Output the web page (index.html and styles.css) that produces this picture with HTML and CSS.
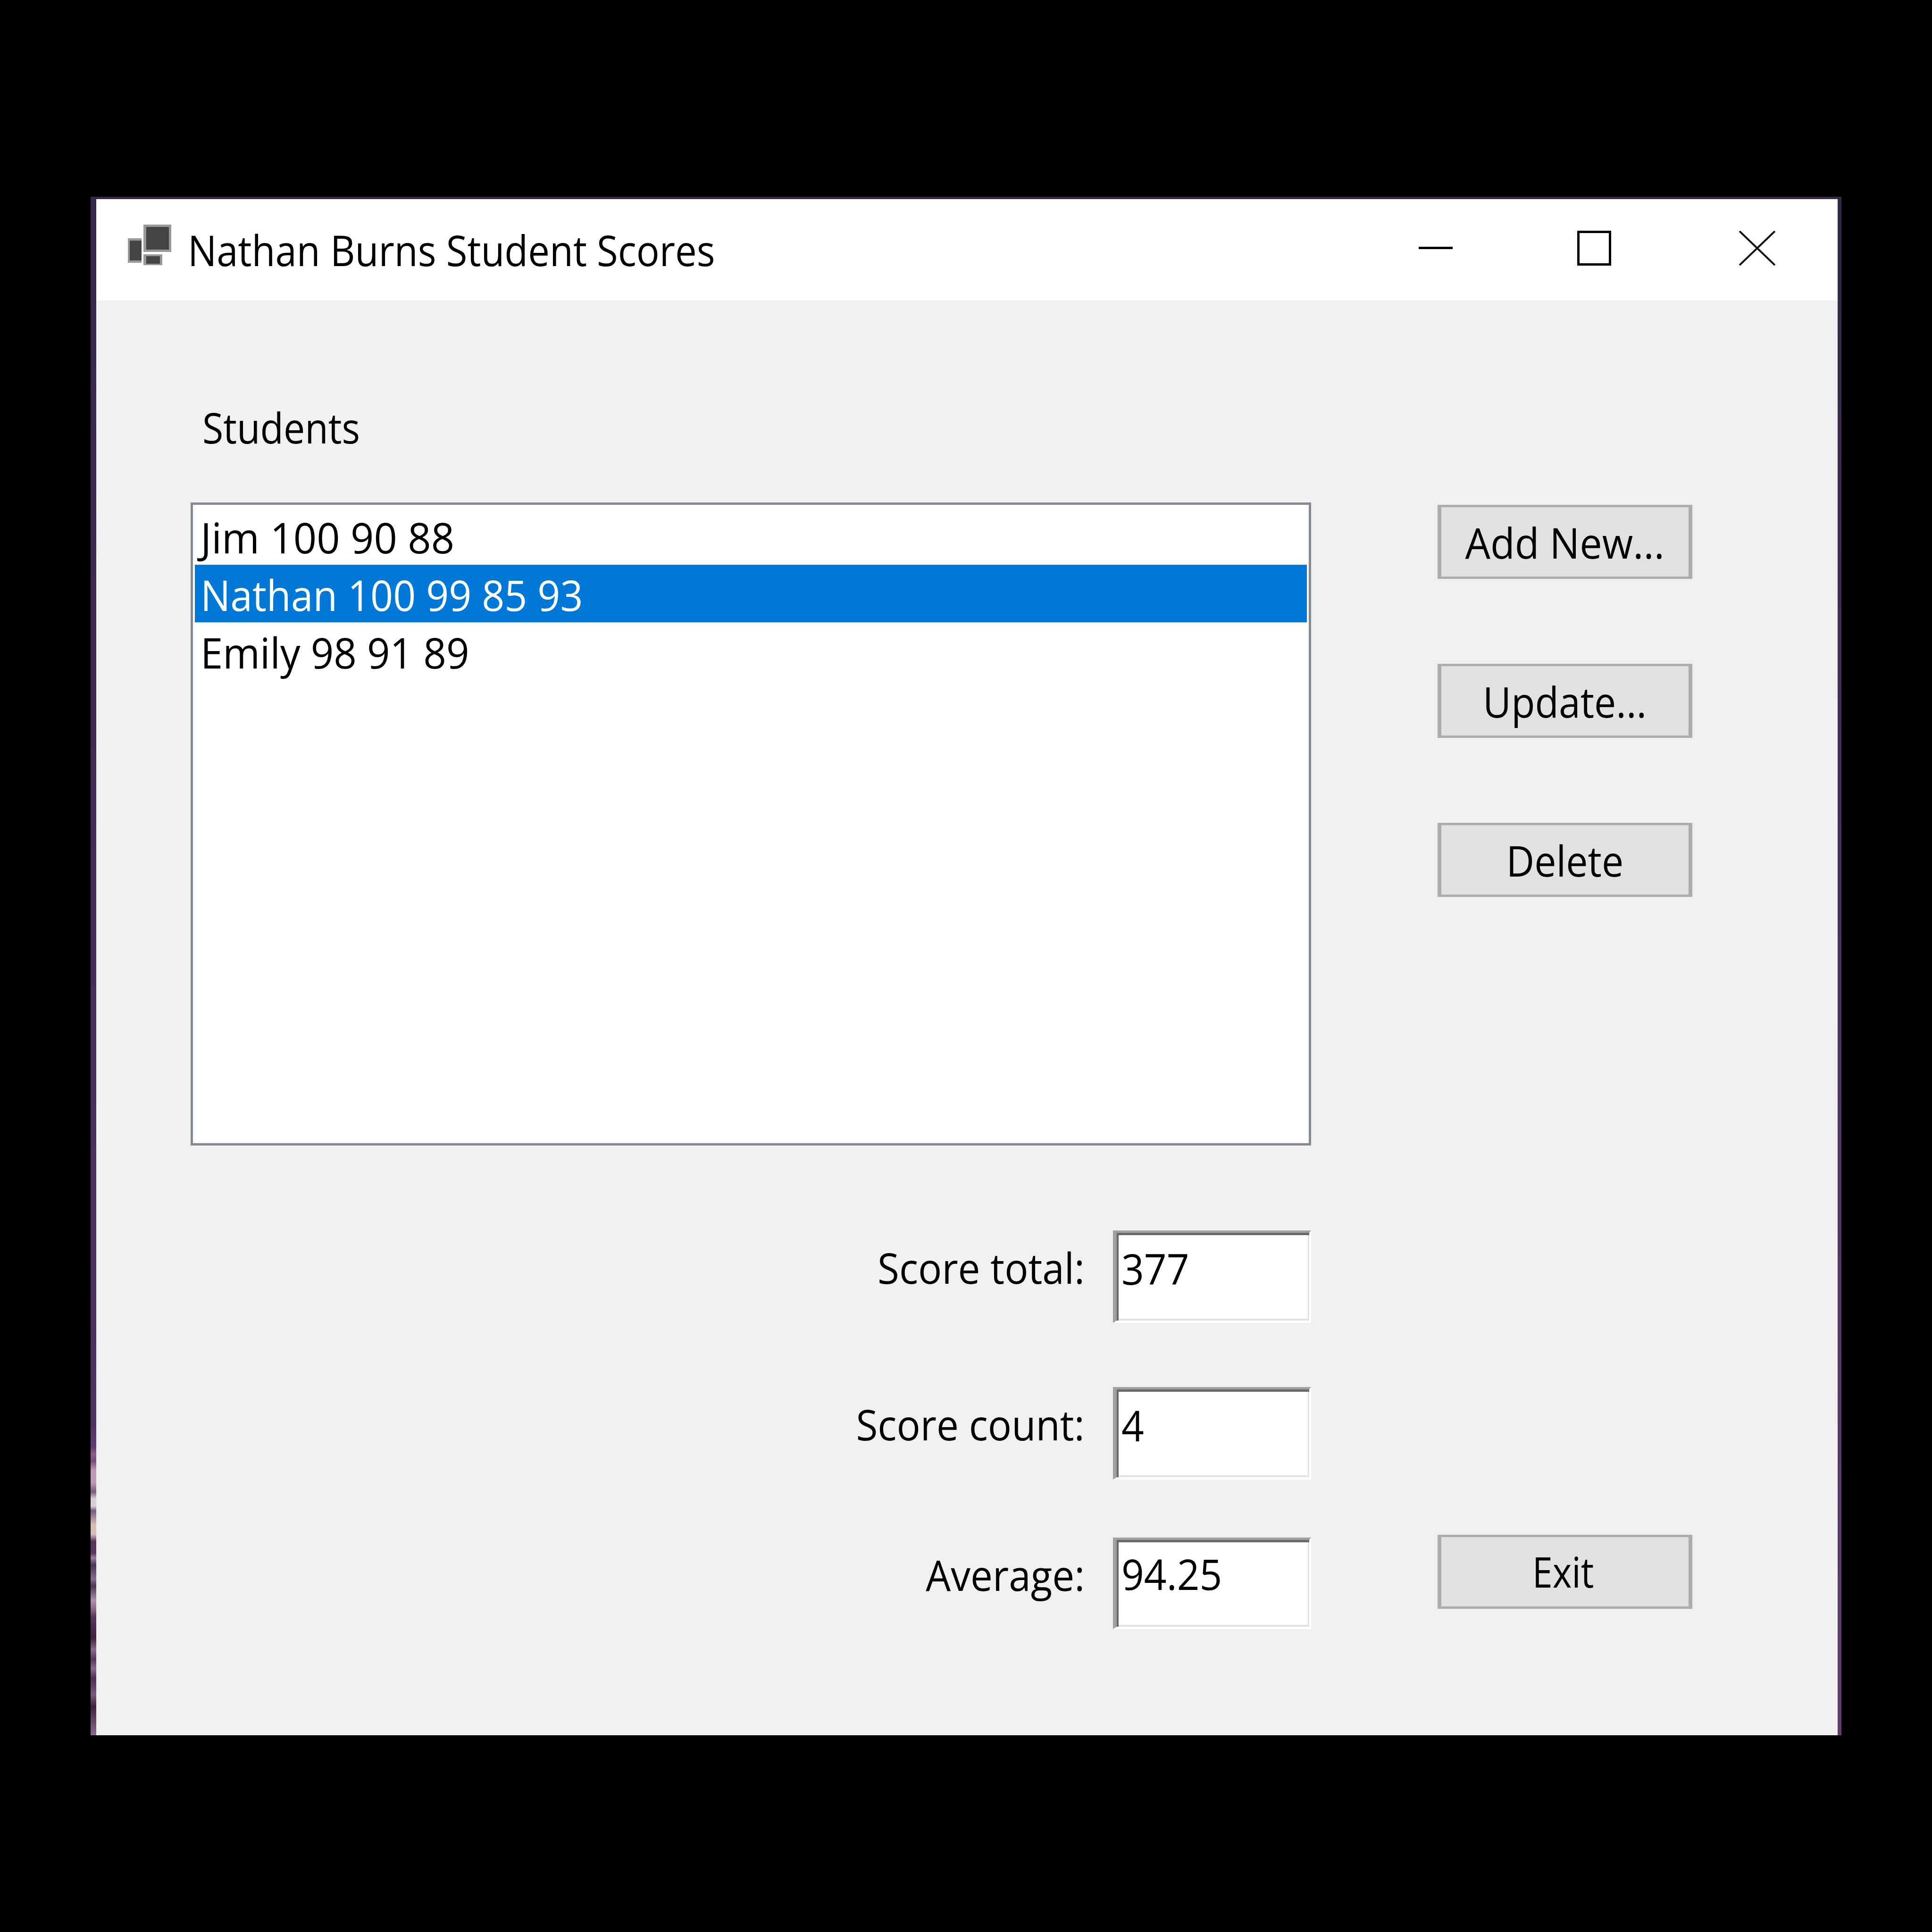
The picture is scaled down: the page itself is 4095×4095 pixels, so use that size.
FILE: index.html
```html
<!doctype html>
<html>

<head>
  <meta charset="UTF-8" />
  <title>Nathan Burns Student Scores</title>
  <link rel="stylesheet" href="styles.css">
</head>

<body>
  <div class="window">
    <div class="edge"></div>
    <div class="frame">
      <div class="titlebar">
        <svg class="app-icon" width="92" height="86" viewBox="0 0 92 86">
          <rect x="33" y="0" width="59" height="58" fill="#999" />
          <rect x="39" y="5" width="48" height="48" fill="#444" />
          <rect x="0" y="29" width="29" height="52" fill="#999" />
          <rect x="4" y="34" width="25" height="42" fill="#444" />
          <rect x="33" y="63" width="40" height="23" fill="#999" />
          <rect x="39" y="67" width="29" height="16" fill="#444" />
        </svg>
        <div class="title"><span class="txt">Nathan Burns Student Scores</span></div>
        <svg class="min-icon" width="72" height="6" viewBox="0 0 72 6">
          <rect width="72" height="5" />
        </svg>
        <svg class="max-icon" width="72" height="74" viewBox="0 0 72 74">
          <rect x="2.500" y="2.500" width="67" height="69" fill="none" stroke="#000" stroke-width="5" />
        </svg>
        <svg class="close-icon" width="77" height="74" viewBox="0 0 77 74">
          <path d="M1 1 76 73M76 1 1 73" fill="none" stroke="#111" stroke-width="4" />
        </svg>
      </div>

      <div class="client">
        <div class="left">
          <div class="heading"><span class="txt">Students</span></div>
          <ul class="list">
            <li><span class="txt">Jim 100 90 88</span></li>
            <li class="selected"><span class="txt">Nathan 100 99 85 93</span></li>
            <li><span class="txt">Emily 98 91 89</span></li>
          </ul>
          <div class="score-row first">
            <label><span class="txt">Score total:</span></label>
            <div class="box"><span class="txt">377</span></div>
          </div>
          <div class="score-row second">
            <label><span class="txt">Score count:</span></label>
            <div class="box"><span class="txt">4</span></div>
          </div>
          <div class="score-row third">
            <label><span class="txt">Average:</span></label>
            <div class="box"><span class="txt">94.25</span></div>
          </div>
        </div>
        <div class="right">
          <button class="add"><span class="txt">Add New...</span></button>
          <button><span class="txt">Update...</span></button>
          <button><span class="txt">Delete</span></button>
          <button class="exit"><span class="txt">Exit</span></button>
        </div>
      </div>
    </div>
    <div class="edge right-edge"></div>
  </div>
</body>

</html>
```

FILE: styles.css
```css
body {
  margin: 0;
  background-color: #000;
  font-family: "Open Sans", "Liberation Sans", sans-serif;
  font-size: 90px;
  color: #000;
}

/* the original is a small window blown up, so its glyphs are narrower than the font's */
.txt {
  display: inline-block;
  white-space: nowrap;
  transform: scaleX(0.93);
  transform-origin: left center;
}

.window {
  display: flex;
  width: 3711px;
  height: 3261px;
  margin: 417px 0 0 192px;
  padding-top: 5px;
  box-sizing: border-box;
  background-color: #35264a;
}

.edge {
  flex: none;
  width: 12px;
  margin-top: -5px;
  background: linear-gradient(to bottom, #35264a 0, #4f3163 2600px, #5f3a72 2640px, #5f3a72 2650px, #8b5f8a 2665px, #7a4a7a 2680px, #c09ab8 2700px, #c09ab8 2725px, #7a5a80 2745px, #d8d0d8 2760px, #d8d0d8 2775px, #7a5a80 2785px, #d8bcb8 2815px, #d8bcb8 2835px, #58345e 2850px, #58345e 2875px, #a07aa0 2885px, #4a3458 2900px, #8a6a90 2930px, #4a3458 2945px, #b090b0 2975px, #8a6088 2995px, #58345e 3010px, #3f2240 3055px, #8a6a90 3080px, #58345e 3100px, #8a6a90 3120px, #4a2e50 3140px, #7a5a80 3175px, #3f2240 3200px, #8a6a90 3261px);
}

.right-edge {
  width: 8px;
  background: linear-gradient(to bottom, #35264a 0, #5a3a70 2800px, #643c70 3261px);
}

.frame {
  flex: auto;
  display: flex;
  flex-direction: column;
  background-color: #f0f0f0;
}

.titlebar {
  flex: none;
  display: flex;
  align-items: center;
  height: 215px;
  background-color: #fff;
}

.app-icon {
  flex: none;
  margin: -21px 0 0 67px;
}

.title {
  margin: -1px 0 0 35px;
  flex: auto;
}

.title .txt {
  transform: scaleX(0.905);
}

.min-icon {
  flex: none;
  margin: -7px 264px 0 0;
}

.max-icon {
  flex: none;
  margin: -7px 271px 0 0;
}

.close-icon {
  flex: none;
  margin: -7px 132px 0 0;
}

.client {
  flex: auto;
  display: flex;
}

.left {
  width: 2575px;
  padding-left: 200px;
  box-sizing: border-box;
}

.heading {
  margin: 200px 0 0 25px;
  height: 228px;
  line-height: 136px;
}

.heading .txt {
  transform: scaleX(0.897);
}

.list {
  list-style: none;
  width: 2375px;
  height: 1363px;
  margin: 0;
  padding: 5px 4px 0;
  box-sizing: border-box;
  background-color: #fff;
  border: 5px solid #858a93;
}

.list li {
  height: 122px;
  padding-left: 12px;
  line-height: 126px;
}

.list .txt {
  transform: scaleX(0.945);
}

.list li:first-child .txt {
  transform: scaleX(0.96);
}

.list li.selected {
  background-color: #0078d7;
  color: #fff;
}

.list li.selected .txt {
  transform: scaleX(0.935);
}

.score-row {
  display: flex;
  justify-content: flex-end;
  align-items: flex-start;
  gap: 60px;
}

.score-row label .txt {
  transform-origin: right center;
}

.first {
  margin-top: 180px;
}

.second {
  margin-top: 136px;
}

.third {
  margin-top: 123px;
}

.third .box {
  height: 194px;
  padding-top: 6px;
}

.score-row label {
  margin-top: 13px;
  line-height: 130px;
}

.box {
  width: 420px;
  height: 196px;
  padding: 10px 0 0 10px;
  box-sizing: border-box;
  line-height: 130px;
  background-color: #fff;
  border-style: solid;
  border-width: 5px 4px 5px 8px;
  border-color: #a0a0a0 #fff #fff #a0a0a0;
  box-shadow: inset 4px 5px 0 #696969, inset -3px -4px 0 #e3e3e3;
}

.right {
  display: flex;
  flex-direction: column;
  gap: 180px;
  padding: 433px 0 0 268px;
}

button {
  width: 540px;
  height: 157px;
  padding: 0;
  font: inherit;
  color: #000;
  background-color: #e1e1e1;
  border-style: solid;
  border-width: 5px 8px;
  border-color: #adadad;
}

button .txt {
  transform: scaleX(0.915);
  transform-origin: center center;
}

.add .txt {
  transform: scaleX(0.94);
}

.exit {
  margin-top: 1172px;
  padding: 0 9px 3px 0;
}

.exit .txt {
  transform: scaleX(0.86);
}
```
